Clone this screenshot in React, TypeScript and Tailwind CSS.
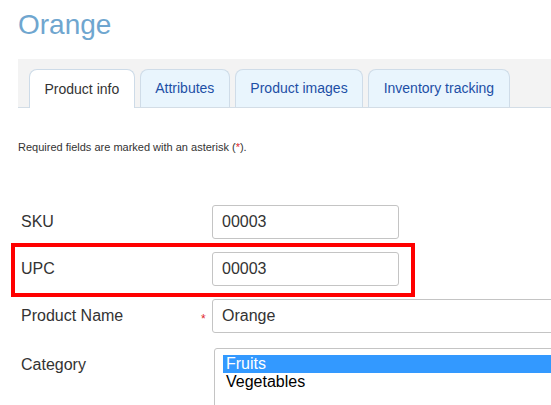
const tabs = ["Product info", "Attributes", "Product images", "Inventory tracking"]

function Row({
  label,
  required,
  children,
}: {
  label: string
  required?: boolean
  children: React.ReactNode
}) {
  return (
    <div className="flex items-center h-[34px]">
      <div className="w-[180px] text-[16px] text-[#333]">{label}</div>
      <div className="w-[11px] text-[12px] text-[#e0262b] leading-none pt-[6px]">{required ? "*" : ""}</div>
      {children}
    </div>
  )
}

function TextBox({ value, wide }: { value: string; wide?: boolean }) {
  return (
    <div
      className={
        "h-[34px] border border-[#c4c4c4] rounded-[3px] bg-white flex items-center pl-[9px] text-[16px] text-[#333] " +
        (wide ? "flex-1 -mr-[20px] rounded-r-none" : "w-[187px]")
      }
    >
      {value}
    </div>
  )
}

export default function App() {
  return (
    <div className="w-[551px] h-[405px] overflow-hidden bg-white font-['Liberation_Sans',Arial,sans-serif]">
      <h1 className="pl-[18px] pt-[7px] h-[59px] text-[28px] leading-[36px] text-[#6fa6cf]">Orange</h1>

      {/* tab bar */}
      <div className="ml-[18px] bg-[#f3f3f3] pt-[10px] pl-[11px] flex gap-[5px] border-b border-[#d3dde6]">
        {tabs.map((t, i) => (
          <div
            key={t}
            className={
              "h-[38px] px-[14.5px] flex items-center text-[14px] rounded-t-[8px] border border-b-0 -mb-px " +
              (i === 0
                ? "bg-white border-[#cddbe8] text-[#333] h-[39px]"
                : "bg-[#e9f5fd] border-[#cfdce8] text-[#1d4fa6]")
            }
          >
            {t}
          </div>
        ))}
      </div>

      <p className="pl-[18px] pt-[32px] text-[11px] leading-[14px] text-[#333]">
        Required fields are marked with an asterisk (<span className="text-[#e0262b]">*</span>).
      </p>

      <div className="pl-[21px] pt-[51px] flex flex-col gap-[13px]">
        <Row label="SKU">
          <TextBox value="00003" />
        </Row>
        <div className="relative">
          <Row label="UPC">
            <TextBox value="00003" />
          </Row>
          <div className="absolute left-[-10px] top-[-9px] w-[404px] h-[54px] border-[4px] border-[#ff0000] pointer-events-none" />
        </div>
        <Row label="Product Name" required>
          <TextBox value="Orange" wide />
        </Row>
        <div className="flex items-start mt-[2px]">
          <div className="w-[193px] pt-[5px] text-[16px] text-[#333]">Category</div>
          <div className="flex-1 -mr-[20px] h-[80px] border border-[#c4c4c4] rounded-l-[3px] pt-[6px] pl-[8px] text-[16px] leading-[18px] text-black">
            <div className="bg-[#3399ff] text-white pl-[3px]">Fruits</div>
            <div className="pl-[3px]">Vegetables</div>
          </div>
        </div>
      </div>
    </div>
  )
}
